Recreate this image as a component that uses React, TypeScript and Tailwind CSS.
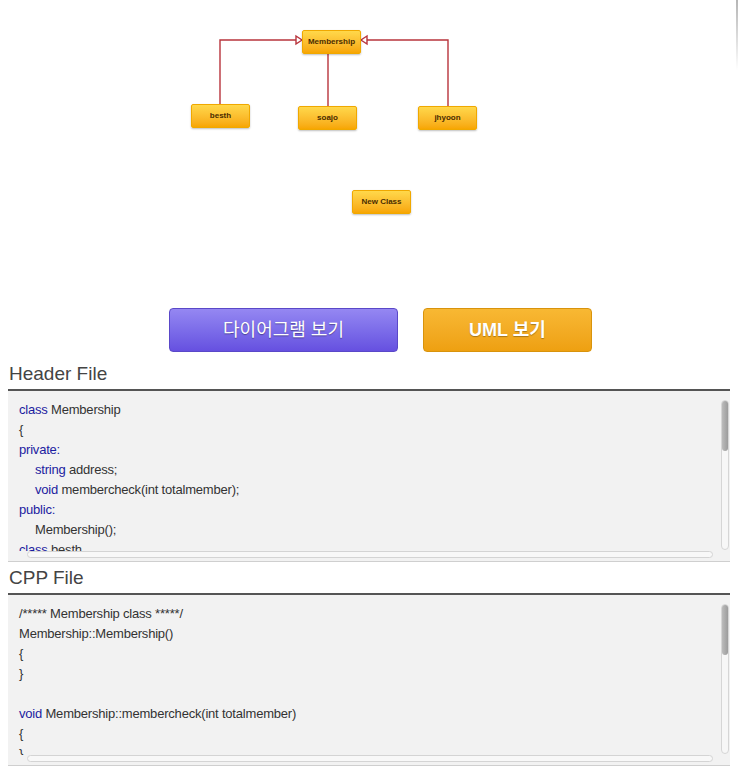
import React from "react";

type Tok = { t: string; kw?: boolean };
type Line = { indent?: boolean; toks: Tok[] };

const headerCode: Line[] = [
  { toks: [{ t: "class", kw: true }, { t: " Membership" }] },
  { toks: [{ t: "{" }] },
  { toks: [{ t: "private:", kw: true }] },
  { indent: true, toks: [{ t: "string", kw: true }, { t: " address;" }] },
  { indent: true, toks: [{ t: "void", kw: true }, { t: " membercheck(int totalmember);" }] },
  { toks: [{ t: "public:", kw: true }] },
  { indent: true, toks: [{ t: "Membership();" }] },
  { toks: [{ t: "class", kw: true }, { t: " besth" }] },
];

const cppCode: Line[] = [
  { toks: [{ t: "/***** Membership class *****/" }] },
  { toks: [{ t: "Membership::Membership()" }] },
  { toks: [{ t: "{" }] },
  { toks: [{ t: "}" }] },
  { toks: [{ t: "\u00a0" }] },
  { toks: [{ t: "void", kw: true }, { t: " Membership::membercheck(int totalmember)" }] },
  { toks: [{ t: "{" }] },
  { toks: [{ t: "}" }] },
];

const nodes = [
  { label: "Membership", x: 302, y: 30 },
  { label: "besth", x: 191, y: 104 },
  { label: "soajo", x: 298, y: 106 },
  { label: "jhyoon", x: 418, y: 106 },
  { label: "New Class", x: 352, y: 190 },
];

function Node({ label, x, y }: { label: string; x: number; y: number }) {
  return (
    <div
      className="absolute flex h-[24px] w-[59px] items-center justify-center rounded-[2px] border border-[#f0a800] bg-gradient-to-b from-[#ffd84a] to-[#f7a600] text-[8px] font-bold text-[#4a2c00] shadow-[0_1px_2px_rgba(0,0,0,0.25)]"
      style={{ left: x, top: y }}
    >
      {label}
    </div>
  );
}

function Diagram() {
  return (
    <div className="relative h-[308px] w-full">
      <svg className="absolute left-0 top-0" width="747" height="308">
        <g stroke="#b8343c" strokeWidth="1.4" fill="none">
          <polyline points="220,104 220,40 300,40" />
          <polyline points="448,106 448,40 363,40" />
          <line x1="328" y1="54" x2="328" y2="106" />
          <polygon points="296,36 302,40 296,44" fill="#fff" />
          <polygon points="367,36 361,40 367,44" fill="#fff" />
        </g>
      </svg>
      {nodes.map((n) => (
        <Node key={n.label} {...n} />
      ))}
      <div className="absolute right-[9px] top-0 h-[70px] w-[2px] bg-gradient-to-b from-[#b5b5b5] to-white" />
    </div>
  );
}

function CodeBox({ lines }: { lines: Line[] }) {
  return (
    <div className="relative h-[171px] overflow-hidden border-b border-[#cfcfcf] bg-[#f2f2f2]">
      <div className="h-[160px] overflow-hidden pl-[11px] pt-[9px]">
        {lines.map((l, i) => (
          <div
            key={i}
            className={`h-[20px] whitespace-pre text-[13px] leading-[20px] tracking-[-0.2px] text-[#333] ${l.indent ? "pl-[16px]" : ""}`}
          >
            {l.toks.map((tk, j) => (
              <span key={j} className={tk.kw ? "text-[#1c1ca0]" : ""}>
                {tk.t}
              </span>
            ))}
          </div>
        ))}
      </div>
      {/* vertical scrollbar */}
      <div className="absolute right-[1px] top-[9px] h-[150px] w-[8px] rounded-full border border-[#d6d6d6] bg-[#f7f7f7]">
        <div className="h-[50px] w-full rounded-full bg-gradient-to-r from-[#bcbcbc] to-[#9c9c9c]" />
      </div>
      {/* horizontal scrollbar */}
      <div className="absolute bottom-[3px] left-[19px] h-[7px] w-[686px] rounded-full border border-[#d4d4d4] bg-[#f8f8f8]" />
    </div>
  );
}

function Section({ title, lines }: { title: string; lines: Line[] }) {
  return (
    <div className="mr-[17px] ml-[8px]">
      <div className="flex h-[31px] items-end pb-[4px] text-[19px] leading-[22px] text-[#444]">
        <span className="ml-[1px]">{title}</span>
      </div>
      <div className="h-[2px] bg-[#555]" />
      <CodeBox lines={lines} />
    </div>
  );
}

export default function App() {
  return (
    <div
      className="h-[772px] w-[747px] overflow-hidden bg-white"
      style={{ fontFamily: '"Liberation Sans", "Noto Sans CJK KR", sans-serif' }}
    >
      <Diagram />
      <div className="flex h-[44px] gap-[25px] pl-[169px]">
        <button className="h-[44px] w-[229px] rounded-[4px] border border-[#5a48c8] bg-gradient-to-b from-[#9587f2] to-[#6650e0] text-[18px] text-white [text-shadow:0_1px_1px_rgba(0,0,0,0.35)]">
          다이어그램 보기
        </button>
        <button className="h-[44px] w-[169px] rounded-[4px] border border-[#d8930c] bg-gradient-to-b from-[#f8b833] to-[#eea010] text-[18px] font-bold text-white [text-shadow:0_1px_1px_rgba(0,0,0,0.3)]">
          UML 보기
        </button>
      </div>
      <div className="h-[6px]" />
      <Section title="Header File" lines={headerCode} />
      <Section title="CPP File" lines={cppCode} />
    </div>
  );
}
